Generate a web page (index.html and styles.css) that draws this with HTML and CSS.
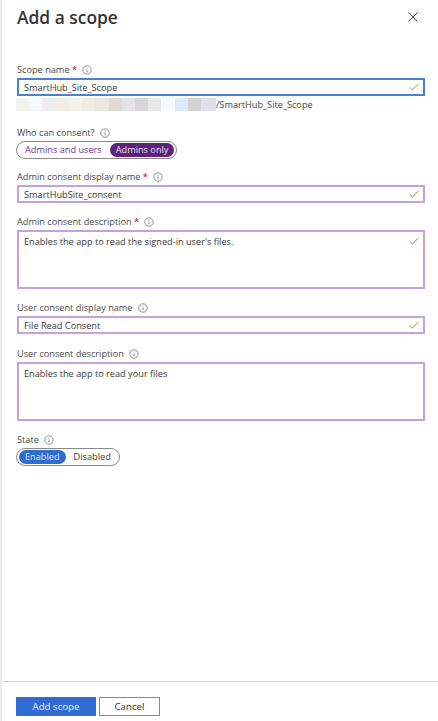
FILE: index.html
```html
<!DOCTYPE html>
<html lang="en">
<head>
    <meta charset="UTF-8">
    <meta name="viewport" content="width=device-width, initial-scale=1.0">
    <title>Add a scope</title>
    <link rel="stylesheet" href="styles.css">
</head>
<body>
    <svg class="icon-defs" width="0" height="0" aria-hidden="true">
        <symbol id="info" viewBox="0 0 10 10">
            <circle cx="5" cy="5" r="4.2" fill="none" stroke="#777" stroke-width="0.8"/>
            <path d="M5 4.4V7.4M5 2.6V3.5" fill="none" stroke="#777" stroke-width="0.9"/>
        </symbol>
        <symbol id="check" viewBox="0 0 10 8">
            <path d="M0.5 4.2L3.4 7L9.5 0.8" fill="none" stroke="#9ccb78" stroke-width="1.1"/>
        </symbol>
    </svg>

    <div class="panel">
        <div class="panel-header">
            <h1>Add a scope</h1>
            <button class="close-btn" aria-label="Close">
                <svg width="10" height="10" viewBox="0 0 10 10"><path d="M0.5 0.5L9.5 9.5M9.5 0.5L0.5 9.5" fill="none" stroke="#555" stroke-width="1"/></svg>
            </button>
        </div>

        <div class="panel-body">
            <div class="field field-scope">
                <label class="field-label">Scope name <span class="req">*</span><svg class="info"><use href="#info"/></svg></label>
                <div class="input input-focus">
                    <span>SmartHub_Site_Scope</span>
                    <svg class="check"><use href="#check"/></svg>
                </div>
                <div class="scope-uri">
                    <span class="redacted"></span><span>/SmartHub_Site_Scope</span>
                </div>
            </div>

            <div class="field field-who">
                <label class="field-label">Who can consent?<svg class="info"><use href="#info"/></svg></label>
                <div class="toggle">
                    <span class="toggle-opt toggle-opt-purple">Admins and users</span>
                    <span class="toggle-opt toggle-on-purple">Admins only</span>
                </div>
            </div>

            <div class="field field-admin-name">
                <label class="field-label">Admin consent display name <span class="req">*</span><svg class="info"><use href="#info"/></svg></label>
                <div class="input input-edited">
                    <span>SmartHubSite_consent</span>
                    <svg class="check"><use href="#check"/></svg>
                </div>
            </div>

            <div class="field field-admin-desc">
                <label class="field-label">Admin consent description <span class="req">*</span><svg class="info"><use href="#info"/></svg></label>
                <div class="input input-edited textarea">
                    <span>Enables the app to read the signed-in user's files.</span>
                    <svg class="check"><use href="#check"/></svg>
                </div>
            </div>

            <div class="field field-user-name">
                <label class="field-label">User consent display name<svg class="info"><use href="#info"/></svg></label>
                <div class="input input-edited">
                    <span>File Read Consent</span>
                    <svg class="check"><use href="#check"/></svg>
                </div>
            </div>

            <div class="field field-user-desc">
                <label class="field-label">User consent description<svg class="info"><use href="#info"/></svg></label>
                <div class="input input-edited textarea">
                    <span>Enables the app to read your files</span>
                </div>
            </div>

            <div class="field field-state">
                <label class="field-label">State<svg class="info"><use href="#info"/></svg></label>
                <div class="toggle">
                    <span class="toggle-opt toggle-on-blue">Enabled</span>
                    <span class="toggle-opt">Disabled</span>
                </div>
            </div>
        </div>

        <div class="panel-footer">
            <button class="btn btn-primary">Add scope</button>
            <button class="btn">Cancel</button>
        </div>
    </div>
</body>
</html>
```

FILE: styles.css
```css
* {
    margin: 0;
    padding: 0;
    box-sizing: border-box;
}

body {
    font-family: 'Open Sans', 'Noto Sans', sans-serif;
    font-size: 9.2px;
    color: #444;
    background: #fff;
}

.icon-defs {
    position: absolute;
}

.panel {
    height: 721px;
    display: flex;
    flex-direction: column;
    border-left: 2px solid #ececec;
}

.panel-header {
    height: 63px;
    display: flex;
    justify-content: space-between;
    padding: 3px 20px 0 15px;
}

.panel-header h1 {
    font-size: 17.4px;
    line-height: 28px;
    font-weight: 600;
    color: #333;
}

.close-btn {
    border: none;
    background: none;
    width: 10px;
    height: 10px;
    margin-top: 9px;
    display: flex;
}

.panel-body {
    flex: 1;
    padding: 0 13px 0 15px;
}

.field-label {
    display: flex;
    align-items: center;
    height: 13px;
    line-height: 13px;
    white-space: pre;
    color: #4a4a4a;
}

.req {
    color: #c8362d;
    font-weight: 600;
}

.info {
    width: 10px;
    height: 10px;
    margin-left: 5px;
}

.input {
    display: flex;
    justify-content: space-between;
    align-items: center;
    height: 18px;
    margin-top: 2px;
    padding: 0 4px 0 5px;
    background: #fff;
    color: #3a3a3a;
}

.input-focus {
    border: 2px solid #4a7fd8;
}

.input-edited {
    border: 2px solid #c4a2de;
}

.textarea {
    height: 59px;
    align-items: flex-start;
    padding-top: 3px;
}

.check {
    width: 10px;
    height: 8px;
    flex: none;
}

.textarea .check {
    margin-top: 2px;
}

.scope-uri {
    display: flex;
    align-items: center;
    height: 14px;
    margin: 1px 0 0 -1px;
    color: #444;
}

/* blurred tenant url */
.redacted {
    width: 200px;
    height: 13px;
    background: linear-gradient(90deg,
        #f3f3ec 0 13px, #f4f8fd 13px 26px, #ededed 26px 39px, #f1eeea 39px 53px,
        #f2f1ea 53px 66px, #f1ece2 66px 79px, #e9e9e2 79px 93px, #e2d8d6 93px 106px,
        #e4e4e6 106px 119px, #d9d6da 119px 132px, #e8e8e6 132px 145px, #f5fafd 145px 159px,
        #dfe9f7 159px 172px, #d2d4d1 172px 185px, #e0e0ea 185px 200px);
}

.toggle {
    display: inline-flex;
    align-items: center;
    gap: 2px;
    height: 18px;
    margin: 2px 0 0 -1px;
    padding: 0 2px;
    border: 1px solid #8a8a8a;
    border-radius: 9px;
    background: #fff;
    color: #3a3a3a;
}

.toggle-opt {
    display: block;
    height: 14px;
    line-height: 14px;
    padding: 0 6px;
    border-radius: 7px;
    white-space: nowrap;
}

.toggle-opt-purple {
    color: #6e3a95;
}

.toggle-on-purple {
    background: #5c2378;
    color: #eadff0;
}

.toggle-on-blue {
    background: #2f6bd0;
    color: #dfe9f8;
}

.field-who {
    margin-top: 15px;
}

.field-admin-name {
    margin-top: 11px;
}

.field-admin-desc {
    margin-top: 12px;
}

.field-user-name {
    margin-top: 12px;
}

.field-user-desc {
    margin-top: 13px;
}

.field-state {
    margin-top: 12px;
}

.panel-footer {
    height: 40px;
    display: flex;
    gap: 3px;
    padding: 15px 0 0 14px;
    border-top: 1px solid #d6d6d6;
}

.btn {
    width: 61px;
    height: 19px;
    font: inherit;
    font-size: 9.7px;
    color: #333;
    background: #fff;
    border: 1px solid #8a8a8a;
}

.btn-primary {
    width: 80px;
    background: #326bd1;
    border: 1px solid #326bd1;
    color: #e6eefa;
}
```
